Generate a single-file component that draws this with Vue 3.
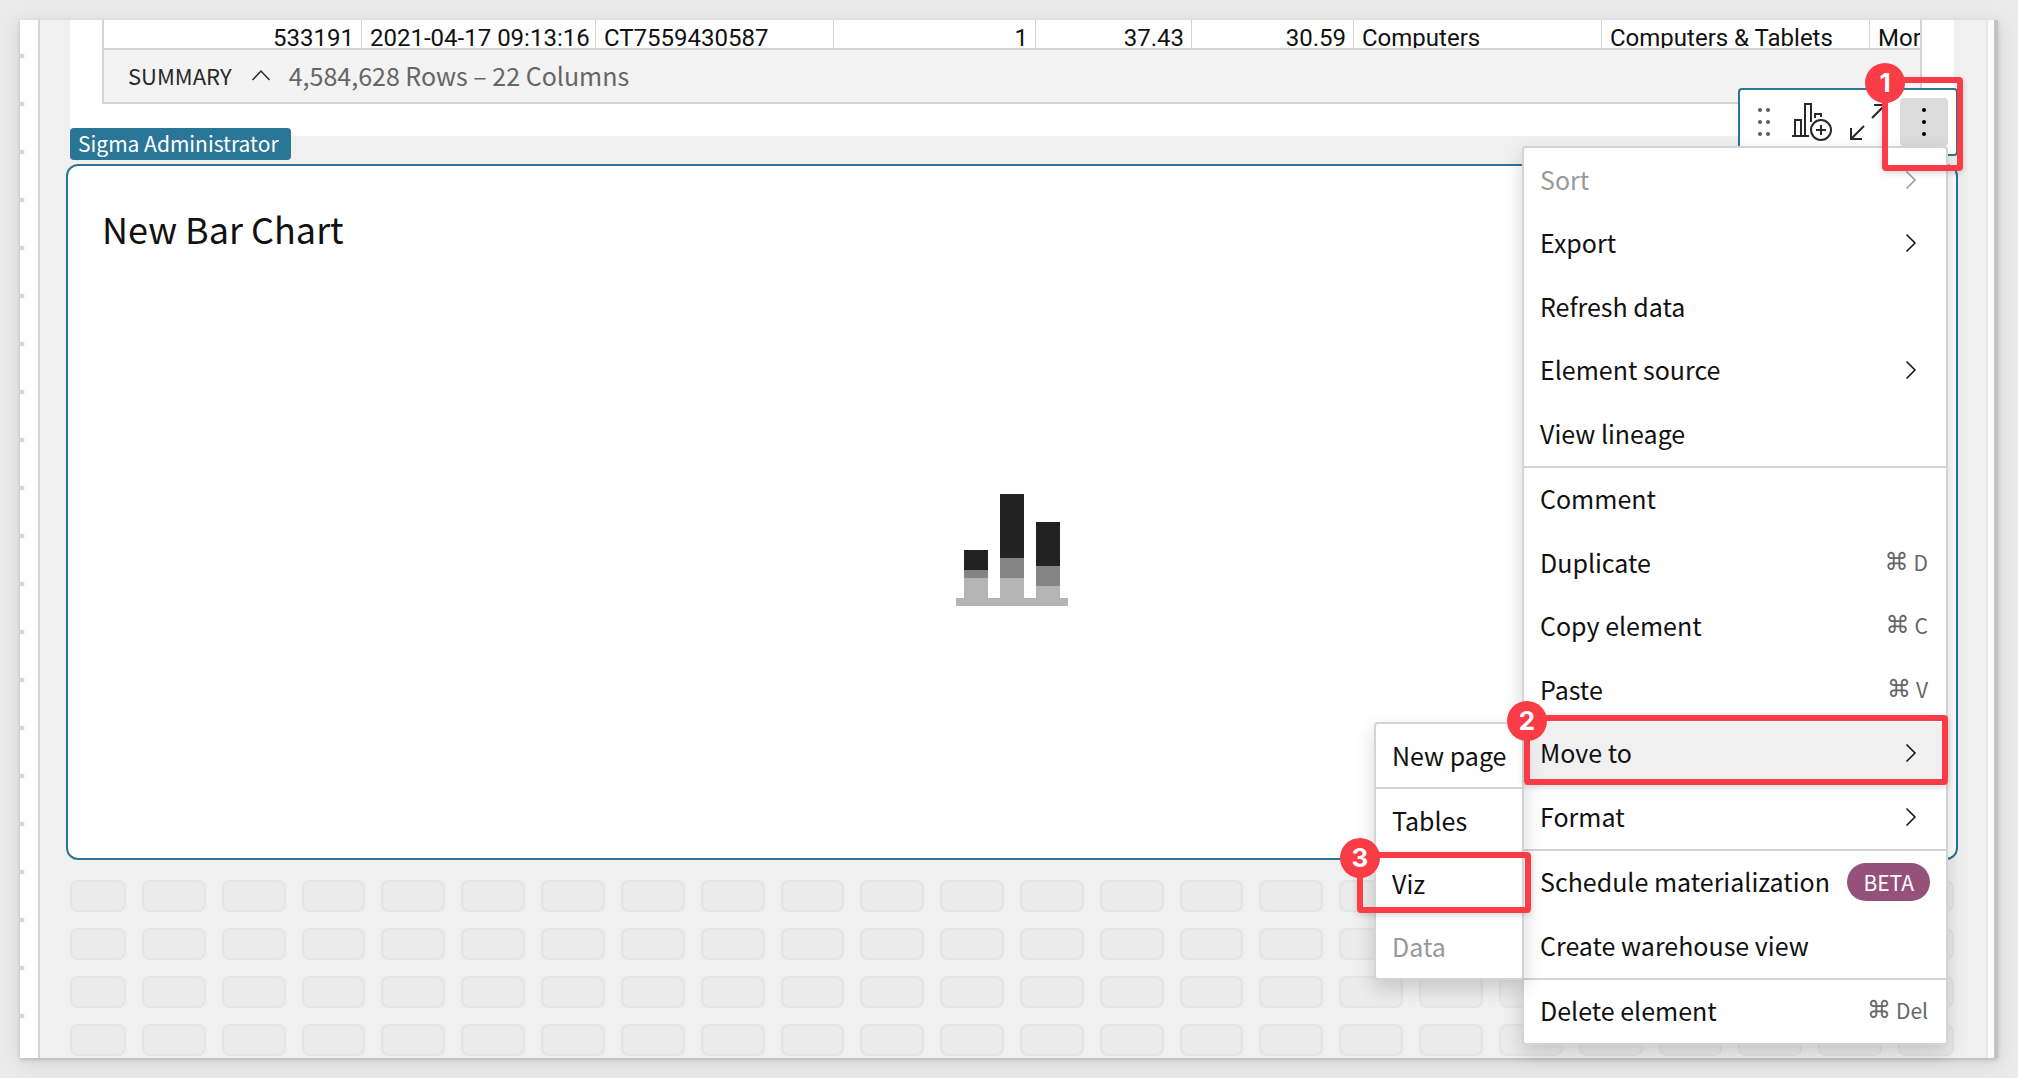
<script setup>
const columns = [
  { value: '533191', width: 258, numeric: true },
  { value: '2021-04-17 09:13:16', width: 234 },
  { value: 'CT7559430587', width: 238 },
  { value: '1', width: 202, numeric: true },
  { value: '37.43', width: 156, numeric: true },
  { value: '30.59', width: 162, numeric: true },
  { value: 'Computers', width: 248 },
  { value: 'Computers & Tablets', width: 268 },
  { value: 'Mor' },
]

const menu = [
  { label: 'Sort', submenu: true, disabled: true },
  { label: 'Export', submenu: true },
  { label: 'Refresh data' },
  { label: 'Element source', submenu: true },
  { label: 'View lineage' },
  { label: 'Comment', divider: true },
  { label: 'Duplicate', shortcut: 'D' },
  { label: 'Copy element', shortcut: 'C' },
  { label: 'Paste', shortcut: 'V' },
  { label: 'Move to', submenu: true, active: true, step: 2 },
  { label: 'Format', submenu: true },
  { label: 'Schedule materialization', badge: 'BETA', divider: true },
  { label: 'Create warehouse view' },
  { label: 'Delete element', shortcut: 'Del', divider: true },
]

const pages = [
  { label: 'New page' },
  { label: 'Tables', divider: true },
  { label: 'Viz', step: 3 },
  { label: 'Data', disabled: true },
]
</script>

<template>
  <main class="window">
    <div class="ruler"></div>

    <div class="canvas">
      <section class="table-element">
        <div class="frame">
          <div class="rows">
            <table>
              <colgroup>
                <col v-for="(c, i) in columns" :key="i" :style="c.width ? { width: c.width + 'px' } : null" />
              </colgroup>
              <tbody>
                <tr>
                  <td v-for="(c, i) in columns" :key="i" :class="{ numeric: c.numeric }">{{ c.value }}</td>
                </tr>
              </tbody>
            </table>
          </div>
          <div class="summary">
            <button type="button" class="summary-toggle">
              SUMMARY
              <svg width="20" height="12" viewBox="0 0 20 12"><path d="M1.500 11 10 2l8.500 9" /></svg>
            </button>
            <span class="counts">4,584,628 Rows – 22 Columns</span>
          </div>
        </div>
      </section>

      <section class="chart-element">
        <span class="owner">Sigma Administrator</span>
        <h1>New Bar Chart</h1>
        <div class="placeholder">
          <svg width="112" height="112" viewBox="0 0 112 112" shape-rendering="crispEdges">
            <path fill="#222" d="M8 56h24v20H8zM44 0h24v64H44zM80 28h24v44H80z" />
            <path fill="#848484" d="M8 76h24v8H8zM44 64h24v20H44zM80 72h24v20H80z" />
            <path fill="#b4b4b4" d="M8 84h24v20H8zM44 84h24v20H44zM80 92h24v12H80zM0 104h112v8H0z" />
          </svg>
        </div>

        <div class="toolbar">
          <button type="button" class="grip" aria-label="Drag element">
            <svg width="12" height="28" viewBox="0 0 12 28" fill="#5c5c5c">
              <circle v-for="n in 6" :key="n" :cx="n % 2 ? 2 : 10" :cy="2 + 12 * Math.floor((n - 1) / 2)" r="2" />
            </svg>
          </button>
          <button type="button" class="add-child" aria-label="Create child element">
            <svg width="40" height="38" viewBox="0 0 40 38" fill="none" stroke="#292929" stroke-width="2">
              <path d="M0 33h17M3 33V17h6v16M13 33V1h6v18M23 15v-4h6v3" />
              <circle cx="29" cy="27" r="10" />
              <path d="M24 27h10M29 22v10" />
            </svg>
          </button>
          <button type="button" class="expand" aria-label="Maximize element">
            <svg width="36" height="36" viewBox="0 0 36 36" fill="none" stroke="#292929" stroke-width="2">
              <path d="M22 14 35 1M24 1h11v11M14 22 1 35M1 24v11h11" />
            </svg>
          </button>
          <button type="button" class="more" aria-label="More options">
            <svg width="4" height="28" viewBox="0 0 4 28"><circle v-for="y in [2, 14, 26]" :key="y" cx="2" :cy="y" r="2" /></svg>
          </button>
        </div>

        <ul class="menu main-menu">
          <li v-for="item in menu" :key="item.label" :class="{ divider: item.divider }">
            <button type="button" :disabled="item.disabled" :class="{ active: item.active }">
              {{ item.label }}
              <svg v-if="item.submenu" class="chevron" width="12" height="20" viewBox="0 0 12 20"><path d="m1.500 1.500 8.500 8.500-8.500 8.500" /></svg>
              <span v-if="item.shortcut" class="shortcut"><kbd>⌘</kbd>{{ item.shortcut }}</span>
              <span v-if="item.badge" class="badge">{{ item.badge }}</span>
            </button>
            <div v-if="item.step" class="callout callout-item"><b>{{ item.step }}</b></div>
          </li>
        </ul>

        <ul class="menu page-menu">
          <li v-for="item in pages" :key="item.label" :class="{ divider: item.divider }">
            <button type="button" :disabled="item.disabled">{{ item.label }}</button>
            <div v-if="item.step" class="callout callout-page"><b>{{ item.step }}</b></div>
          </li>
        </ul>

        <div class="callout callout-more"><b>1</b></div>
      </section>

      <div class="layout-grid">
        <i v-for="n in 96" :key="n"></i>
      </div>
    </div>

    <div class="gutter"></div>
  </main>
</template>

<style>
body {
  margin: 0;
  background: #eaeaea;
}
</style>

<style scoped>
.window {
  display: flex;
  margin: 20px;
  font-family: "Noto Sans CJK JP", "Noto Sans", sans-serif;
  color: #111;
  background: #f0f0f0;
  box-shadow: 0 2px 4px rgba(0, 0, 0, 0.16), 0 4px 20px rgba(0, 0, 0, 0.1);
}

button {
  font: inherit;
  color: inherit;
  margin: 0;
  padding: 0;
  border: 0;
  background: none;
}

svg {
  display: block;
  flex: none;
}

.ruler {
  flex: none;
  width: 18px;
  border-right: 2px solid #d4d4d4;
  background: #fff radial-gradient(circle at 2px 36px, #d4d4d4 2px, transparent 3px) 0 0 / 18px 48px;
}

.gutter {
  flex: none;
  width: 6px;
  background: #fafafa;
  border-left: 2px solid #e8e8e8;
  border-right: 4px solid #c2c2c2;
}

.canvas {
  flex: 1;
  min-width: 0;
  padding: 0 32px 2px 30px;
}

.table-element {
  padding: 0 32px 32px;
  background: #fff;
}

.frame {
  border: 2px solid #d4d4d4;
  border-top: 0;
}

.rows {
  height: 28px;
  overflow: hidden;
  border-bottom: 2px solid #d4d4d4;
}

table {
  width: 100%;
  table-layout: fixed;
  border-collapse: separate;
  border-spacing: 0;
  font: 24px/20px Roboto, sans-serif;
}

td {
  box-sizing: border-box;
  padding: 8px 7px 0 8px;
  border-right: 1px solid #d4d4d4;
  white-space: nowrap;
  overflow: hidden;
}

td:last-child {
  border-right: 0;
  padding-right: 0;
}

.numeric {
  text-align: right;
}

.summary {
  display: flex;
  align-items: center;
  gap: 18px;
  box-sizing: border-box;
  height: 52px;
  padding: 0 24px 2px;
  background: #f3f3f3;
}

.summary-toggle {
  display: flex;
  align-items: center;
  gap: 19px;
  font-size: 22px;
  line-height: 32px;
  color: #292929;
}

.summary-toggle svg {
  fill: none;
  stroke: #292929;
  stroke-width: 1.500;
}

.counts {
  font-size: 25px;
  line-height: 32px;
  color: #666;
}

.chart-element {
  position: relative;
  display: flex;
  flex-direction: column;
  box-sizing: border-box;
  height: 696px;
  margin: 28px -4px 0;
  padding: 34px 34px 14px;
  border: 2px solid #2a7696;
  border-radius: 12px;
  background: #fff;
}

.owner {
  position: absolute;
  left: 2px;
  top: -38px;
  padding: 0 12px 2px 8px;
  border-radius: 4px;
  background: #2a7696;
  color: #fff;
  font-size: 21px;
  line-height: 30px;
}

h1 {
  margin: 0;
  font-size: 36px;
  line-height: 56px;
  font-weight: 400;
}

.placeholder {
  flex: 1;
  display: flex;
  align-items: center;
  justify-content: center;
}

.toolbar {
  position: absolute;
  right: -2px;
  top: -78px;
  display: flex;
  align-items: flex-start;
  box-sizing: border-box;
  width: 220px;
  height: 68px;
  padding: 8px 8px 0 18px;
  border: 2px solid #2a7696;
  border-radius: 4px;
  background: #fff;
}

.toolbar button {
  display: flex;
  align-items: center;
  height: 48px;
}

.grip {
  margin-right: 22px;
}

.add-child {
  margin-right: 18px;
}

.toolbar .more {
  justify-content: center;
  width: 48px;
  margin-left: auto;
  border-radius: 4px;
  background: #dbdbdb;
}

.menu {
  position: absolute;
  display: flex;
  flex-direction: column;
  box-sizing: border-box;
  margin: 0;
  padding: 0;
  list-style: none;
  border: 2px solid #d4d4d4;
  border-radius: 4px;
  background: #fff;
  box-shadow: 0 8px 20px rgba(0, 0, 0, 0.16);
  font-size: 25px;
  line-height: 36px;
}

.main-menu {
  right: 8px;
  top: -20px;
  width: 426px;
  height: 899px;
}

.page-menu {
  right: 432px;
  top: 556px;
  width: 150px;
  height: 258px;
}

.menu li {
  position: relative;
  display: flex;
  flex: 1 1 0;
}

.menu .divider {
  border-top: 2px solid #d4d4d4;
}

.menu button {
  display: flex;
  flex: 1;
  align-items: center;
  padding: 0 16px 2px;
  white-space: nowrap;
}

.menu button:disabled {
  color: #999;
}

.menu .active {
  background: #f0f0f0;
}

.chevron {
  margin: 2px 13px 0 auto;
  fill: none;
  stroke: currentColor;
  stroke-width: 1.500;
}

.shortcut {
  display: flex;
  align-items: center;
  gap: 5px;
  margin: 0 2px 0 auto;
  font-size: 21px;
  color: #666;
}

.shortcut kbd {
  font-family: "DejaVu Sans", sans-serif;
  font-size: 24px;
}

.badge {
  margin: 2px 0 0 auto;
  padding: 0 16px;
  border-radius: 19px;
  background: #94527b;
  color: #fff;
  font-size: 21px;
  line-height: 38px;
}

.callout {
  position: absolute;
  z-index: 1;
  box-sizing: border-box;
  border: 6px solid #f93c46;
  border-radius: 4px;
  box-shadow: 0 2px 6px rgba(0, 0, 0, 0.16);
  pointer-events: none;
}

.callout b {
  position: absolute;
  left: -23px;
  top: -20px;
  width: 40px;
  border-radius: 50%;
  background: #f93c46;
  color: #fff;
  font: 700 26px/40px Inter, sans-serif;
  text-align: center;
}

.callout-item {
  inset: -7px -2px 0 0;
}

.callout-page {
  inset: 0 -9px 2px -19px;
}

.callout-more {
  right: -7px;
  top: -89px;
  width: 81px;
  height: 94px;
}

.layout-grid {
  display: grid;
  grid-template-columns: 56px repeat(22, 1fr) 56px;
  grid-auto-rows: 32px;
  gap: 16px;
  margin-top: 20px;
}

.layout-grid i {
  border: 2px solid #e4e4e4;
  border-radius: 8px;
  background: #ebebeb;
}
</style>
